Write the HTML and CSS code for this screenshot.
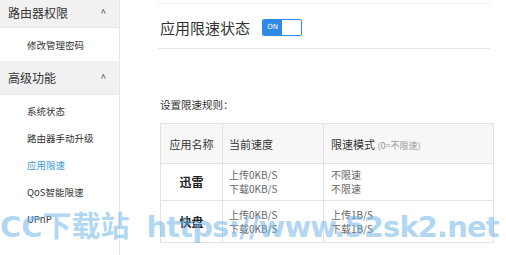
FILE: index.html
```html
<!DOCTYPE html>
<html lang="zh">
<head>
<meta charset="utf-8">
<link rel="stylesheet" href="styles.css">
</head>
<body>
<div class="page">
  <aside class="sidebar">
    <div class="group-head first"><span>路由器权限</span><span class="caret">^</span></div>
    <ul class="items one">
      <li>修改管理密码</li>
    </ul>
    <div class="group-head"><span>高级功能</span><span class="caret">^</span></div>
    <ul class="items">
      <li>系统状态</li>
      <li>路由器手动升级</li>
      <li class="active">应用限速</li>
      <li>QoS智能限速</li>
      <li>UPnP</li>
    </ul>
  </aside>
  <main class="main">
    <div class="topline"></div>
    <div class="title-row">
      <h1 class="title">应用限速状态</h1>
      <div class="toggle"><span class="on">ON</span><span class="off"></span></div>
    </div>
    <p class="rules">设置限速规则：</p>
    <table class="grid">
      <colgroup><col class="c1"><col class="c2"><col class="c3"></colgroup>
      <thead>
        <tr><th class="center">应用名称</th><th>当前速度</th><th>限速模式 <small>(0=不限速)</small></th></tr>
      </thead>
      <tbody>
        <tr class="r1"><td class="center name">迅雷</td><td>上传0KB/S<br>下载0KB/S</td><td>不限速<br>不限速</td></tr>
        <tr class="r2"><td class="center name">快盘</td><td>上传0KB/S<br>下载0KB/S</td><td>上传1B/S<br>下载1B/S</td></tr>
      </tbody>
    </table>
  </main>
  <div class="watermark"><span class="wm-cn">CC下载站</span><span class="wm-url">https://www.52sk2.net</span></div>
</div>
</body>
</html>
```
FILE: styles.css
```css
* { box-sizing: border-box; }
html, body { margin: 0; padding: 0; background: #fff; }
body {
  font-family: "Noto Sans CJK SC", "Noto Sans", sans-serif;
  color: #333;
  width: 506px;
  height: 255px;
  overflow: hidden;
}
.page {
  position: relative;
  display: flex;
  height: 255px;
}
.sidebar {
  width: 120px;
  flex: none;
  border-right: 1px solid #e6e6e6;
  height: 255px;
}
.group-head {
  height: 34px;
  background: #f1f1f1;
  display: flex;
  align-items: center;
  justify-content: space-between;
  padding: 0 13px 0 8px;
  font-size: 12px;
  color: #333;
  border-bottom: 1px solid #e8e8e8;
}
.group-head.first { height: 28px; padding-bottom: 2px; }
.caret { font-size: 10px; color: #444; }
.items { list-style: none; margin: 0; padding: 2px 0 0; }
.items.one { padding-top: 0; }
.items.one li { height: 33px; }
.items li {
  height: 27px;
  display: flex;
  align-items: center;
  padding-left: 27px;
  font-size: 9.5px;
  color: #333;
}
.items li.active { color: #3d9bdc; }
.main {
  flex: 1;
  padding-left: 38px;
  padding-top: 3px;
}
.topline {
  width: 332px;
  border-top: 1px solid #f0f0f0;
}
.title-row {
  width: 332px;
  height: 45px;
  display: flex;
  align-items: center;
  padding: 2px 0 0 2px;
  border-bottom: 1px solid #e4e4e4;
}
.title {
  margin: 0;
  font-size: 15px;
  font-weight: normal;
  color: #333;
}
.toggle {
  margin-left: 12px;
  width: 40px;
  height: 17px;
  border: 1px solid #2f8ae6;
  border-radius: 2px;
  display: flex;
  overflow: hidden;
}
.toggle .on {
  width: 19px;
  background: #2f8ae6;
  color: #fff;
  font-size: 7px;
  display: flex;
  align-items: center;
  justify-content: center;
  font-family: "DejaVu Sans", sans-serif;
}
.toggle .off { flex: 1; background: #fff; }
.rules {
  margin: 49px 0 0 2px;
  font-size: 10.5px;
  line-height: 14px;
  color: #333;
}
.grid {
  margin: 11px 0 0 2px;
  border-collapse: collapse;
  width: 333px;
  table-layout: fixed;
}
.c1 { width: 62px; }
.c2 { width: 101px; }
.c3 { width: 170px; }
.grid th, .grid td {
  border: 1px solid #e3e3e3;
  text-align: left;
  vertical-align: middle;
}
.grid th {
  background: #f7f7f7;
  height: 40px;
  font-size: 11px;
  font-weight: normal;
  color: #333;
  padding: 0 0 0 6px;
}
.grid th:nth-child(3) { padding-left: 7px; }
.grid th small { font-size: 9px; color: #999; }
.grid td {
  font-size: 10px;
  line-height: 14px;
  color: #666;
  padding: 0 0 0 6px;
}
.grid td:nth-child(3) { padding-left: 7px; }
.grid .center { text-align: center; padding: 0; }
.grid td.name { font-weight: bold; font-size: 12px; color: #222; }
.r1 td { height: 37px; }
.r2 td { height: 42px; }
.watermark {
  position: absolute;
  left: 0;
  top: 203px;
  white-space: nowrap;
  font-family: "DejaVu Sans", "Noto Sans CJK SC", sans-serif;
  font-weight: bold;
  font-size: 29px;
  color: rgba(110, 180, 232, 0.55);
}
.wm-cn { letter-spacing: 0; }
.wm-url { margin-left: 17px; letter-spacing: -0.9px; }
```
